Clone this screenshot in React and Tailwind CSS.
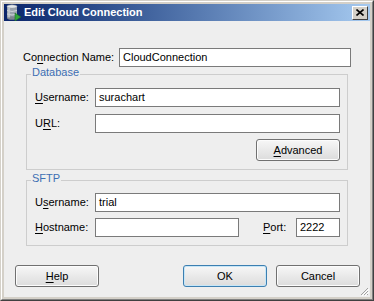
import React from 'react';

const U = ({ children }) => <span className="underline underline-offset-[2px]">{children}</span>;

const TextBox = ({ value = '', className = '' }) => (
  <div className={`h-[19px] bg-white border border-[#7a7a7a] px-[3px] flex items-center leading-none ${className}`}>
    {value}
  </div>
);

const Button = ({ children, primary }) => (
  <div
    className={`w-[84px] h-[22px] rounded-[3px] border flex items-center justify-center bg-linear-to-b from-[#f7f7f7] to-[#dcdcdc] ${
      primary ? 'border-[#3c7fb1] shadow-[inset_0_0_0_1px_#c7e6f7]' : 'border-[#707070] shadow-[inset_0_0_0_1px_#fcfcfc]'
    }`}
  >
    {children}
  </div>
);

const Group = ({ title, className = '', children }) => (
  <div className={`relative border border-[#cdcdcd] mx-[3px] ${className}`}>
    <span className="absolute left-[4px] top-[-8px] bg-[#eeeeee] px-[1px] leading-none text-[#3d6fb3]">
      {title}
    </span>
    {children}
  </div>
);

const DbIcon = () => (
  <svg width="16" height="17" viewBox="0 0 16 17">
    <rect x="2" y="2" width="10" height="12" fill="#9aa3ad" />
    <ellipse cx="7" cy="14" rx="5" ry="1.8" fill="#7d8690" />
    <ellipse cx="7" cy="2.5" rx="5" ry="1.8" fill="#e4e8ec" stroke="#7d8690" strokeWidth="0.6" />
    <path d="M2 6.5 Q7 8.5 12 6.5 M2 10 Q7 12 12 10" stroke="#d8dde2" strokeWidth="0.8" fill="none" />
    <rect x="3" y="3.5" width="2" height="10" fill="#c8cdd3" opacity="0.7" />
    <path d="M10 9 L16 13 L10 17 Z" fill="#2fa83a" stroke="#1d6b24" strokeWidth="0.6" />
  </svg>
);

export default function App() {
  return (
    <div className="w-[374px] h-[301px] bg-[#d4d0c8] border border-t-[#d4d0c8] border-l-[#d4d0c8] border-r-[#404040] border-b-[#404040] font-['Liberation_Sans',Arial,sans-serif] text-[11px] text-black">
      <div className="h-full border border-t-white border-l-white border-r-[#808080] border-b-[#808080] p-[2px] flex flex-col">
        {/* title bar */}
        <div className="h-[17px] flex items-center bg-linear-to-r from-[#0a246a] to-[#a6caf0] pl-[1px] pr-[2px]">
          <DbIcon />
          <span className="ml-[3px] text-white font-bold text-[11px] leading-none">Edit Cloud Connection</span>
          <div className="ml-auto w-[16px] h-[14px] bg-[#d4d0c8] border border-t-white border-l-white border-r-[#404040] border-b-[#404040] flex items-center justify-center">
            <svg width="8" height="7" viewBox="0 0 8 7">
              <path d="M0.5 0.5 L7.5 6.5 M7.5 0.5 L0.5 6.5" stroke="#000" strokeWidth="1.6" />
            </svg>
          </div>
        </div>

        {/* body */}
        <div className="relative flex-1 bg-[#eeeeee] flex flex-col">
          <div className="pl-[19px] pr-[19px] pt-[27px]">
            <div className="flex items-center">
              <span className="w-[96px]">Co<U>n</U>nection Name:</span>
              <TextBox value="CloudConnection" className="flex-1" />
            </div>

            <Group title="Database" className="mt-[7px] pt-[13px] pb-[8px] pl-[8px] pr-[7px]">
              <div className="flex items-center">
                <span className="w-[60px]"><U>U</U>sername:</span>
                <TextBox value="surachart" className="flex-1" />
              </div>
              <div className="flex items-center mt-[7px]">
                <span className="w-[60px]">U<U>R</U>L:</span>
                <TextBox className="flex-1" />
              </div>
              <div className="flex justify-end mt-[6px]">
                <Button><span><U>A</U>dvanced</span></Button>
              </div>
            </Group>

            <Group title="SFTP" className="mt-[10px] pt-[12px] pb-[8px] pl-[8px] pr-[7px]">
              <div className="flex items-center">
                <span className="w-[60px]">U<U>s</U>ername:</span>
                <TextBox value="trial" className="flex-1" />
              </div>
              <div className="flex items-center mt-[6px]">
                <span className="w-[60px]"><U>H</U>ostname:</span>
                <TextBox className="w-[144px]" />
                <span className="ml-[24px]"><U>P</U>ort:</span>
                <TextBox value="2222" className="ml-auto w-[44px]" />
              </div>
            </Group>
          </div>

          <div className="mt-auto flex items-center pl-[11px] pr-[10px] pb-[10px]">
            <Button><span><U>H</U>elp</span></Button>
            <div className="ml-auto flex gap-[9px]">
              <Button primary>OK</Button>
              <Button>Cancel</Button>
            </div>
          </div>

          <svg className="absolute right-[1px] bottom-[1px]" width="10" height="10" viewBox="0 0 10 10">
            <path d="M9 2 L2 9 M9 5 L5 9 M9 8 L8 9" stroke="#a0a0a0" strokeWidth="1" />
            <path d="M10 3 L3 10 M10 6 L6 10" stroke="#ffffff" strokeWidth="1" />
          </svg>
        </div>
      </div>
    </div>
  );
}
